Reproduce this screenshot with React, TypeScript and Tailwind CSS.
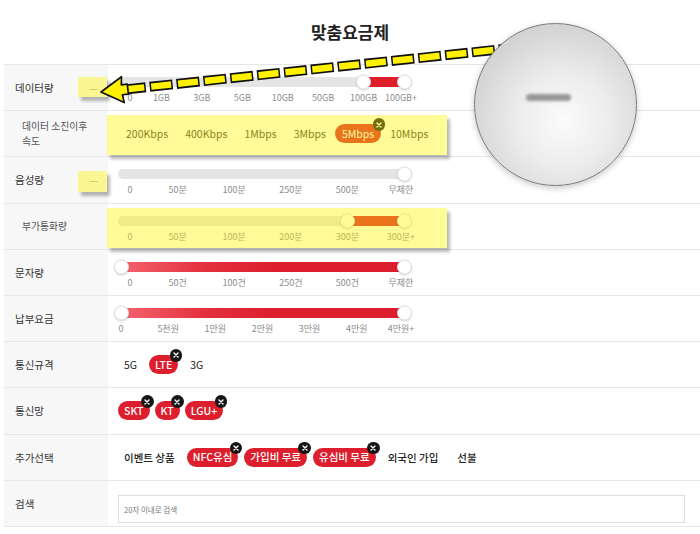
import type { ReactNode } from "react";

const FONT = "font-['Noto_Sans_CJK_KR','Noto_Sans',sans-serif]";

// track starts 10px into the value cell; first/last stops sit 3px / 286px along it
const T0 = 3;
const T1 = 286;

function CloseBadge() {
  return (
    <span className="absolute -right-[4px] -top-[6px] flex h-[12.5px] w-[12.5px] items-center justify-center rounded-full bg-[#161616]">
      <svg viewBox="0 0 12 12" className="h-[12px] w-[12px]">
        <path d="M4 4l4 4M8 4l-4 4" stroke="white" strokeWidth="1.4" strokeLinecap="round" />
      </svg>
    </span>
  );
}

function Chip({
  children,
  on = false,
  pad = "px-[6px]",
  weight = "font-medium",
}: {
  children: ReactNode;
  on?: boolean;
  pad?: string;
  weight?: string;
}) {
  if (!on) {
    return <span className={`${pad} whitespace-nowrap text-[10.5px] leading-[19px] text-[#222]`}>{children}</span>;
  }
  return (
    <span
      className={`relative inline-flex h-[19px] items-center whitespace-nowrap rounded-full bg-[#dc1e2d] ${pad} text-[10.5px] ${weight} text-white`}
    >
      {children}
      <CloseBadge />
    </span>
  );
}

function Slider({
  labels,
  lo,
  hi,
  gradient = false,
  zeroShift = true,
}: {
  labels: string[];
  lo: number;
  hi: number;
  gradient?: boolean;
  zeroShift?: boolean;
}) {
  const step = (T1 - T0) / (labels.length - 1);
  const pos = (i: number) => T0 + i * step;
  const thumbs = lo === hi ? [lo] : [lo, hi];
  return (
    <div className="pt-[12px]">
      <div className="relative h-[10px] w-[293px] rounded-full bg-[#e5e5e5]">
        {hi > lo && (
          <div
            className={`absolute top-0 h-[10px] ${
              gradient
                ? "bg-[linear-gradient(90deg,#f4646e_0%,#e3303c_30%,#dc1e2d_55%,#dc1e2d_100%)]"
                : "bg-[#dc1e2d]"
            }`}
            style={{ left: pos(lo), width: pos(hi) - pos(lo) }}
          />
        )}
        {thumbs.map((t) => (
          <div
            key={t}
            className="absolute top-1/2 h-[15px] w-[15px] -translate-y-1/2 rounded-full border border-[#dedede] bg-white shadow-[0_1px_2px_rgba(0,0,0,0.15)]"
            style={{ left: pos(t) - 7.5 }}
          />
        ))}
      </div>
      <div className="mt-[5px] flex" style={{ marginLeft: T0 - step / 2 }}>
        {labels.map((l, i) => (
          <span
            key={l}
            className={`shrink-0 whitespace-nowrap text-center text-[9px] leading-[12px] text-[#8c8c8c] ${
              i === 0 && zeroShift ? "translate-x-[9px]" : ""
            } ${i === labels.length - 1 ? "-translate-x-[3px]" : ""}`}
            style={{ width: step }}
          >
            {l}
          </span>
        ))}
      </div>
    </div>
  );
}

function Row({
  label,
  sub = false,
  dash = false,
  children,
  overlay,
}: {
  label: ReactNode;
  sub?: boolean;
  dash?: boolean;
  children: ReactNode;
  overlay?: ReactNode;
}) {
  return (
    <div className="relative flex h-[46.2px] border-b border-[#e8e8e8]">
      <div
        className={`flex w-[104px] shrink-0 items-center bg-[#f7f7f7] ${
          sub ? "pl-[18px] text-[9.8px] text-[#555]" : "pl-[11px] text-[10.5px] text-[#333]"
        }`}
      >
        <span className="leading-[15px]">{label}</span>
        {dash && <span className="ml-auto mr-[10px] text-[10px] leading-none text-[#a0a0a0]">—</span>}
      </div>
      <div className="min-w-0 flex-1 pl-[10px]">{children}</div>
      {overlay}
    </div>
  );
}

// translucent yellow highlight boxes of the tutorial overlay
const HILITE = "absolute bg-[rgba(255,246,0,0.4)] shadow-[3px_4px_3px_rgba(0,0,0,0.28)]";

function Annotations() {
  return (
    <>
      <svg className="pointer-events-none absolute left-0 top-0" width="700" height="534" viewBox="0 0 700 534">
        <g transform="translate(101 92) rotate(-6.1)">
          <line x1="22" y1="0" x2="404" y2="0" stroke="#111" strokeWidth="10" strokeDasharray="23 4" />
          <line
            x1="22"
            y1="0"
            x2="404"
            y2="0"
            stroke="#fff200"
            strokeWidth="6.5"
            strokeDasharray="20 7"
            strokeDashoffset="-1.5"
          />
          <path
            d="M0 0 L22 -13 L21 -5 L27 -5 L27 5 L21 5 L22 13 Z"
            fill="#fff200"
            stroke="#111"
            strokeWidth="1.7"
            strokeLinejoin="round"
          />
        </g>
      </svg>
      <div className="pointer-events-none absolute left-[474px] top-[23px] h-[163px] w-[163px] rounded-full border border-[#7a7a7a] bg-[radial-gradient(circle_at_55%_60%,#fbfbfb_0%,#ececec_36%,#d2d2d2_74%,#bcbcbc_100%)] shadow-[0_2px_6px_rgba(0,0,0,0.22)]">
        <div className="absolute left-[51px] top-[70px] h-[7px] w-[45px] rounded-sm bg-[#969696] blur-[1.5px]" />
      </div>
    </>
  );
}

export default function App() {
  return (
    <div className={`relative h-[534px] w-[700px] overflow-hidden bg-white ${FONT}`}>
      <h1 className="flex h-[64px] items-center justify-center text-[17px] font-bold text-[#222]">맞춤요금제</h1>

      <div className="ml-[4px] border-t border-[#e6e6e6]">
        <Row
          label="데이터량"
          dash
          overlay={<div className={`${HILITE} left-[74px] top-[12px] h-[20px] w-[29px]`} />}
        >
          <Slider labels={["0", "1GB", "3GB", "5GB", "10GB", "50GB", "100GB", "100GB+"]} lo={6} hi={7} />
        </Row>

        <Row
          label={
            <>
              데이터 소진이후
              <br />
              속도
            </>
          }
          sub
          overlay={<div className={`${HILITE} left-[103px] top-[4px] h-[40px] w-[340px]`} />}
        >
          <div className="flex h-full items-center gap-[1px]">
            {["200Kbps", "400Kbps", "1Mbps", "3Mbps"].map((s) => (
              <Chip key={s} pad="px-[8px]">
                <span className="text-[#333]">{s}</span>
              </Chip>
            ))}
            <Chip on pad="px-[7px]" weight="font-normal">
              5Mbps
            </Chip>
            <Chip pad="px-[8px]">
              <span className="text-[#333]">10Mbps</span>
            </Chip>
          </div>
        </Row>

        <Row
          label="음성량"
          dash
          overlay={<div className={`${HILITE} left-[74px] top-[14px] h-[21px] w-[29px]`} />}
        >
          <Slider labels={["0", "50분", "100분", "250분", "500분", "무제한"]} lo={5} hi={5} />
        </Row>

        <Row
          label="부가통화량"
          sub
          overlay={<div className={`${HILITE} left-[103px] top-[4px] h-[40px] w-[340px]`} />}
        >
          <Slider labels={["0", "50분", "100분", "200분", "300분", "300분+"]} lo={4} hi={5} />
        </Row>

        <Row label="문자량">
          <Slider labels={["0", "50건", "100건", "250건", "500건", "무제한"]} lo={0} hi={5} gradient />
        </Row>

        <Row label="납부요금">
          <Slider
            labels={["0", "5천원", "1만원", "2만원", "3만원", "4만원", "4만원+"]}
            lo={0}
            hi={6}
            gradient
            zeroShift={false}
          />
        </Row>

        <Row label="통신규격">
          <div className="flex h-full items-center gap-[6px]">
            <Chip>5G</Chip>
            <Chip on>LTE</Chip>
            <Chip>3G</Chip>
          </div>
        </Row>

        <Row label="통신망">
          <div className="flex h-full items-center gap-[5px]">
            <Chip on>SKT</Chip>
            <Chip on>KT</Chip>
            <Chip on>LGU+</Chip>
          </div>
        </Row>

        <Row label="추가선택">
          <div className="flex h-full items-center gap-[6px]">
            <Chip>
              <span className="font-medium">이벤트 상품</span>
            </Chip>
            <Chip on>NFC유심</Chip>
            <Chip on>가입비 무료</Chip>
            <Chip on>유심비 무료</Chip>
            <Chip>
              <span className="font-medium">외국인 가입</span>
            </Chip>
            <Chip>
              <span className="ml-[1px] font-medium">선불</span>
            </Chip>
          </div>
        </Row>

        <Row label="검색">
          <div className="pt-[13px]">
            <input
              type="text"
              placeholder="20자 이내로 검색"
              className="h-[28px] w-[567px] border border-[#dddddd] bg-white px-[5px] text-[7.5px] text-[#333] outline-none placeholder:text-[#777]"
            />
          </div>
        </Row>
      </div>

      <Annotations />
    </div>
  );
}
